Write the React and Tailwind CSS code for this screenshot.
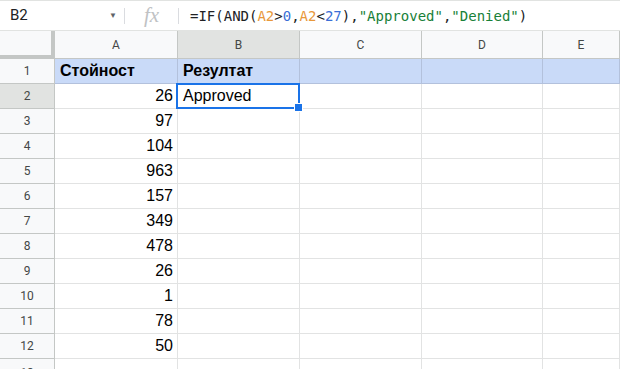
import React from 'react';

const cols = [
    { key: 'A', w: 'w-[123px]' },
    { key: 'B', w: 'w-[122px]' },
    { key: 'C', w: 'w-[122px]' },
    { key: 'D', w: 'w-[121px]' },
    { key: 'E', w: 'flex-1' },
];

const values = [26, 97, 104, 963, 157, 349, 478, 26, 1, 78, 50];

const Formula = () => (
    <span className="text-[14px] text-[#202124] whitespace-pre" style={{ fontFamily: '"DejaVu Sans Mono", monospace' }}>
        =IF(AND(<span className="text-[#e8983a]">A2</span>&gt;<span className="text-[#3b6fd6]">0</span>,<span className="text-[#e8983a]">A2</span>&lt;<span className="text-[#3b6fd6]">27</span>),<span className="text-[#188038]">"Approved"</span>,<span className="text-[#188038]">"Denied"</span>)
    </span>
);

const App = () => {
    return (
        <div className="w-[620px] h-[369px] overflow-hidden bg-white" style={{ fontFamily: '"Liberation Sans", Arial, sans-serif' }}>
            {/* formula bar */}
            <div className="h-[31px] flex items-center border-t border-b border-[#e1e3e1] box-border">
                <div className="w-[124px] flex items-center pl-[10px] pr-[7px]">
                    <span className="text-[15px] text-[#202124]" style={{ fontFamily: 'Roboto, sans-serif' }}>B2</span>
                    <span className="ml-auto text-[8px] text-[#5f6368]">▼</span>
                </div>
                <div className="w-px h-[16px] bg-[#dadce0]"></div>
                <div className="w-[53px] flex justify-center">
                    <span className="text-[21px] italic text-[#c0c2c4]" style={{ fontFamily: '"Liberation Serif", serif' }}>fx</span>
                </div>
                <div className="w-px h-[16px] bg-[#dadce0]"></div>
                <div className="pl-[11px]">
                    <Formula />
                </div>
            </div>

            {/* column headers */}
            <div className="flex h-[28px] bg-[#f8f9fa] text-[12px] text-[#444746]" style={{ fontFamily: 'Roboto, sans-serif' }}>
                <div className="w-[55px] h-full border-r-[4px] border-b-[4px] border-[#c4c7c5] box-border"></div>
                {cols.map((c) => (
                    <div
                        key={c.key}
                        className={`${c.w} h-full flex items-center justify-center border-r border-b border-[#c4c7c5] box-border ${c.key === 'B' ? 'bg-[#e1e3e1]' : ''}`}
                    >
                        {c.key}
                    </div>
                ))}
            </div>

            {/* row 1 */}
            <div className="flex h-[25px]">
                <div className="w-[55px] h-full flex items-center justify-center bg-[#f8f9fa] border-r border-b border-[#c4c7c5] box-border text-[12px] text-[#444746]" style={{ fontFamily: 'Roboto, sans-serif' }}>1</div>
                {cols.map((c) => (
                    <div key={c.key} className={`${c.w} h-full flex items-center px-[5px] bg-[#c9daf8] border-r border-b border-[#b3c1dc] box-border text-[16px] font-bold text-[#000]`}>
                        {c.key === 'A' ? 'Стойност' : c.key === 'B' ? 'Резултат' : ''}
                    </div>
                ))}
            </div>

            {values.map((v, i) => {
                const row = i + 2;
                return (
                    <div key={row} className="flex h-[25px]">
                        <div
                            className={`w-[55px] h-full flex items-center justify-center border-r border-b border-[#c4c7c5] box-border text-[12px] text-[#444746] ${row === 2 ? 'bg-[#e1e3e1]' : 'bg-[#f8f9fa]'}`}
                            style={{ fontFamily: 'Roboto, sans-serif' }}
                        >
                            {row}
                        </div>
                        {cols.map((c) => (
                            <div
                                key={c.key}
                                className={`${c.w} h-full relative flex items-center px-[4px] border-r border-b border-[#e2e3e3] box-border text-[16px] text-[#000] ${c.key === 'A' ? 'justify-end' : ''}`}
                            >
                                {c.key === 'A' ? v : ''}
                                {c.key === 'B' && row === 2 && (
                                    <>
                                        <span className="pl-px">Approved</span>
                                        <div className="absolute z-10 -left-[2px] -top-[1px] -right-[1px] -bottom-[1px] border-2 border-[#1a73e8]"></div>
                                        <div className="absolute z-20 -right-[4px] -bottom-[4px] w-[7px] h-[7px] bg-[#1a73e8] border border-white box-content"></div>
                                    </>
                                )}
                            </div>
                        ))}
                    </div>
                );
            })}
            <div className="flex h-[25px]">
                <div className="w-[55px] h-full flex items-start justify-center bg-[#f8f9fa] border-r border-[#c4c7c5] box-border text-[12px] text-[#444746] pt-[5px]" style={{ fontFamily: 'Roboto, sans-serif' }}>13</div>
                {cols.map((c) => (
                    <div key={c.key} className={`${c.w} h-full border-r border-[#e2e3e3] box-border`}></div>
                ))}
            </div>
        </div>
    );
};

export default App;
